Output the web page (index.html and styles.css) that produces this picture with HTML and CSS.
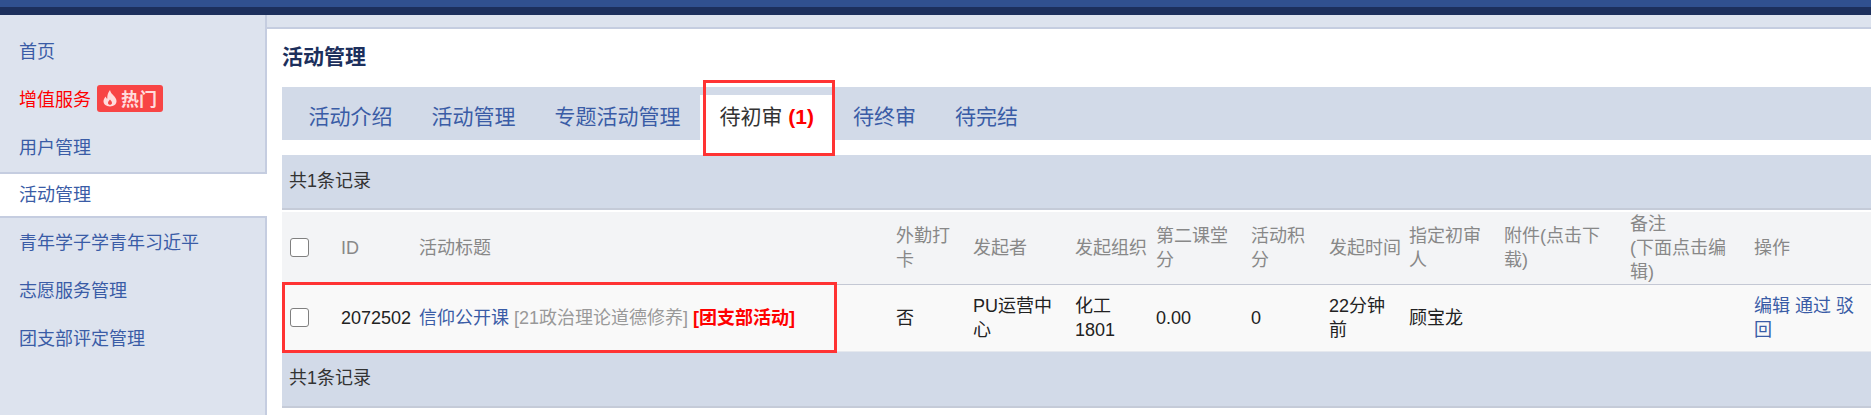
FILE: index.html
```html
<!DOCTYPE html>
<html lang="zh-CN">
<head>
  <meta charset="UTF-8">
  <title>活动管理</title>
  <link rel="stylesheet" href="styles.css">
</head>
<body>
<div class="topbar"></div>

<div class="layout">
  <ul class="sidebar">
    <li><a href="#">首页</a></li>
    <li>
      <a href="#" class="hot-link">增值服务</a>
      <span class="hot-badge">
        <svg viewBox="0 0 16 18" width="16" height="18"><path d="M8 1c.6 2.6 2 3.900 3.500 5.600C13.200 8.500 14.500 10 14.500 12.300 14.500 15.300 11.800 17.500 8 17.500S1.500 15.300 1.500 12.300C1.500 10.300 2.500 8.800 3.800 7.400 4 8.700 4.500 9.400 5.300 9.800 5.100 6.500 6 3.300 8 1ZM8 10.500C6.800 11.800 6 12.800 6 14 6 15.200 6.900 15.800 8 15.800S10 15.200 10 14C10 12.800 9.200 11.800 8 10.500Z" fill-rule="evenodd"/></svg>
        热门
      </span>
    </li>
    <li><a href="#">用户管理</a></li>
    <li class="active"><a href="#">活动管理</a></li>
    <li><a href="#">青年学子学青年习近平</a></li>
    <li><a href="#">志愿服务管理</a></li>
    <li><a href="#">团支部评定管理</a></li>
  </ul>

  <div class="main">
    <h2 class="page-title">活动管理</h2>

    <ul class="tabs">
      <li><a href="#">活动介绍</a></li>
      <li><a href="#">活动管理</a></li>
      <li><a href="#">专题活动管理</a></li>
      <li class="current"><a href="#">待初审 <b>(1)</b></a></li>
      <li><a href="#">待终审</a></li>
      <li><a href="#">待完结</a></li>
    </ul>

    <div class="record-bar">共1条记录</div>

    <table class="list">
      <colgroup>
        <col class="c-check"><col class="c-id"><col class="c-title"><col class="c-outdoor">
        <col class="c-author"><col class="c-org"><col class="c-credit"><col class="c-score">
        <col class="c-time"><col class="c-reviewer"><col class="c-file"><col class="c-note"><col class="c-ops">
      </colgroup>
      <thead>
        <tr>
          <th class="check-cell"><input type="checkbox" class="check"></th>
          <th>ID</th>
          <th>活动标题</th>
          <th>外勤打卡</th>
          <th>发起者</th>
          <th>发起组织</th>
          <th>第二课堂分</th>
          <th>活动积<br>分</th>
          <th>发起时间</th>
          <th>指定初审人</th>
          <th>附件(点击下<br>载)</th>
          <th>备注<br>(下面点击编<br>辑)</th>
          <th>操作</th>
        </tr>
      </thead>
      <tbody>
        <tr>
          <td class="check-cell"><input type="checkbox" class="check"></td>
          <td>2072502</td>
          <td><a href="#">信仰公开课</a> <span class="muted">[21政治理论道德修养]</span> <b class="tag">[团支部活动]</b></td>
          <td>否</td>
          <td>PU运营中<br>心</td>
          <td>化工<br>1801</td>
          <td>0.00</td>
          <td>0</td>
          <td>22分钟前</td>
          <td>顾宝龙</td>
          <td></td>
          <td></td>
          <td><a href="#">编辑</a> <a href="#">通过</a> <a href="#">驳回</a></td>
        </tr>
      </tbody>
    </table>

    <div class="record-bar record-bar-bottom">共1条记录</div>
  </div>
</div>

<!-- red annotation boxes drawn over the screenshot -->
<div class="mark mark-tab"></div>
<div class="mark mark-row"></div>
</body>
</html>
```

FILE: styles.css
```css
html, body {
  margin: 0;
  height: 100%;
  overflow: hidden;
}

body {
  position: relative;
  font-family: "Liberation Sans", "Noto Sans CJK SC", sans-serif;
  font-size: 18px;
  color: #222222;
  background: #ffffff;
}

a {
  color: #3a5ca6;
  text-decoration: none;
}

ul {
  list-style: none;
  margin: 0;
  padding: 0;
}

.topbar {
  height: 7px;
  background: #30508f;
  border-bottom: 8px solid #1c2f5c;
}

.layout {
  display: flex;
  height: 400px;
  background: #dde3ee;
}

/* sidebar */
.sidebar {
  box-sizing: border-box;
  flex: 0 0 267px;
  padding-top: 11px;
  border-right: 2px solid #c5cde0;
}

.sidebar li {
  display: flex;
  align-items: center;
  box-sizing: border-box;
  height: 48px;
  padding-left: 19px;
}

.sidebar .active {
  height: 46px;
  margin: 2px -2px -1px 0;
  padding-bottom: 4px;
  background: #ffffff;
  border-top: 2px solid #c5cde0;
  border-bottom: 2px solid #c5cde0;
}

.sidebar .hot-link {
  color: #ff0000;
}

.hot-badge {
  display: flex;
  align-items: center;
  justify-content: space-between;
  box-sizing: border-box;
  width: 66px;
  height: 27px;
  margin-left: 6px;
  padding: 0 6px 0 5px;
  font-weight: bold;
  color: #ffdcdc;
  background: #f84545;
  border-radius: 3px;
}

.hot-badge svg {
  fill: #ffdcdc;
}

/* main */
.main {
  flex: 1;
  margin-top: 12px;
  padding-left: 15px;
  background: #ffffff;
  border-top: 2px solid #c5cde0;
}

.page-title {
  height: 58px;
  margin: 0;
  font-size: 21px;
  line-height: 56px;
  color: #1c2f5c;
}

.tabs {
  display: flex;
  box-sizing: border-box;
  height: 53px;
  padding: 8px 0 0 7px;
  background: #d2dae8;
}

.tabs li {
  height: 45px;
  padding: 0 19.5px;
  font-size: 21px;
  line-height: 44px;
}

.tabs .current {
  background: #ffffff;
}

.tabs .current a {
  color: #333333;
}

.tabs .current b {
  color: #ff0000;
}

.record-bar {
  box-sizing: border-box;
  height: 55px;
  margin-top: 15px;
  padding-left: 7px;
  line-height: 53px;
  color: #333333;
  background: #d2dae8;
  border-bottom: 2px solid #c5cbd8;
}

.record-bar-bottom {
  height: 56px;
  margin-top: 0;
}

.list {
  width: 1589px;
  margin-top: 2px;
  table-layout: fixed;
  border-collapse: collapse;
}

.c-check { width: 53px; }
.c-id { width: 78px; }
.c-title { width: 477px; }
.c-outdoor { width: 77px; }
.c-author { width: 102px; }
.c-org { width: 81px; }
.c-credit { width: 95px; }
.c-score { width: 78px; }
.c-time { width: 80px; }
.c-reviewer { width: 95px; }
.c-file { width: 126px; }
.c-note { width: 124px; }
.c-ops { width: 123px; }

.list th,
.list td {
  padding: 0 0 0 6px;
  line-height: 24px;
  text-align: left;
  font-weight: normal;
}

.list th {
  height: 72px;
  color: #888888;
  background: #f3f4f6;
  border-bottom: 1px solid #c4c8d4;
}

.list td {
  height: 66px;
  background: #f9f9f9;
  border-bottom: 1px solid #e5e8ee;
}

.list .check-cell {
  padding-left: 8px;
}

.check {
  display: block;
  box-sizing: border-box;
  width: 19px;
  height: 19px;
  margin: -2px 0 0;
  appearance: none;
  background: #ffffff;
  border: 1px solid #808080;
  border-radius: 3px;
}

.muted {
  color: #999999;
}

.tag {
  color: #ff0000;
}

.mark {
  position: absolute;
  box-sizing: border-box;
  border: 3px solid #ff3333;
}

.mark-tab {
  left: 703px;
  top: 80px;
  width: 132px;
  height: 76px;
}

.mark-row {
  left: 282px;
  top: 282px;
  width: 555px;
  height: 71px;
}
```
